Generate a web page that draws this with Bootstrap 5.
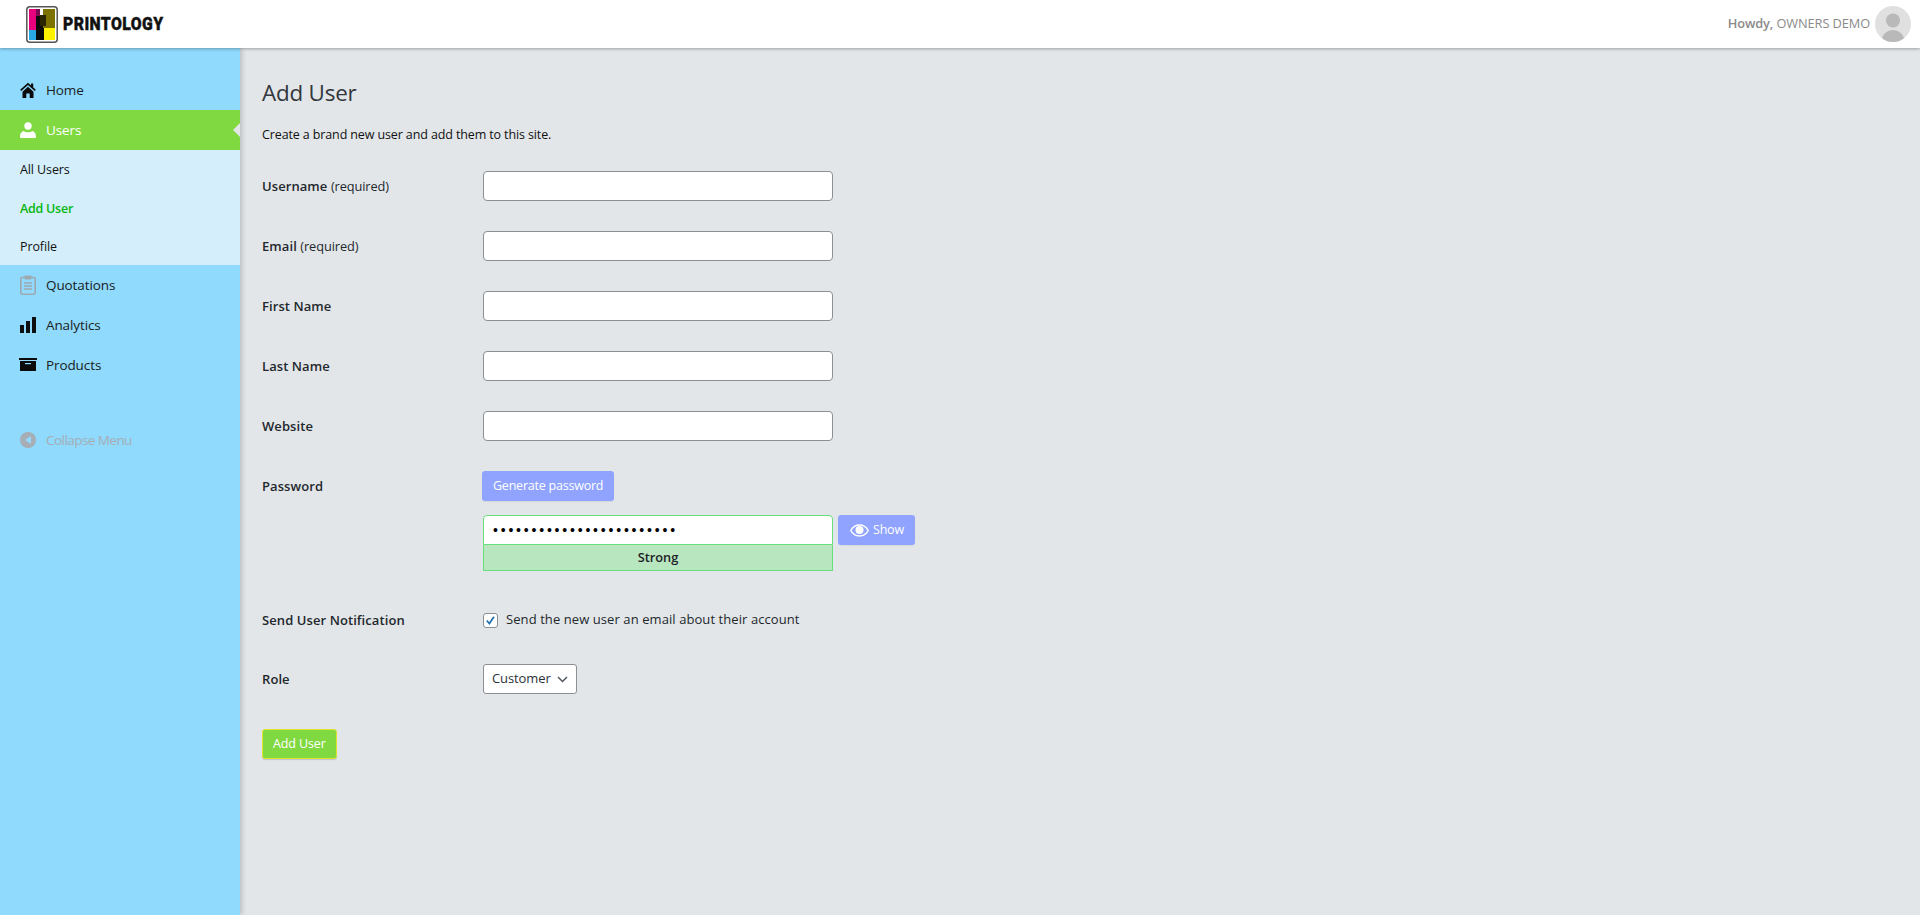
<!DOCTYPE html>
<html lang="en">
<head>
<meta charset="utf-8">
<title>Add User</title>
<link href="https://cdn.jsdelivr.net/npm/bootstrap@5.3.0/dist/css/bootstrap.min.css" rel="stylesheet">
<style>
html,body{height:100%}
body{font-family:"Open Sans","Noto Sans",sans-serif;font-size:13px;background:#e2e6e9;color:#212529;overflow:hidden}
.topbar{height:48px;background:#fff;box-shadow:0 1px 3px rgba(0,0,0,.3);position:relative;z-index:3;padding:0 0 0 26px}
.brand-word{font-family:"Roboto",sans-serif;font-weight:900;font-size:19px;color:#111;letter-spacing:.5px;transform:scaleX(.83);transform-origin:left center;margin-left:5px;width:100px;white-space:nowrap;-webkit-text-stroke:.4px #111}
.howdy{color:#8a8a8a;font-size:12.8px;margin-right:5px;letter-spacing:-.1px}
.howdy b{font-weight:600}
.avatar{width:36px;height:36px;border-radius:50%;background:#e0e0e0;overflow:hidden;margin-right:9px}
.shell{height:calc(100vh - 48px)}
.sidebar{width:240px;flex:none;background:#8fdafd;padding-top:22px;box-shadow:2px 0 5px rgba(0,0,0,.18);position:relative;z-index:2}
.side-link{height:40px;padding-left:20px;color:#1a1d21;text-decoration:none;font-size:13.5px;position:relative;letter-spacing:-.1px}
.side-link svg{width:16px;height:16px;margin-right:10px;flex:none}
.side-link svg.tall-ico{height:20px}
.side-link:hover{color:#1a1d21}
.side-link.is-on{background:#81d942;color:#fff}
.side-link.is-on::after{content:"";position:absolute;right:0;top:13px;border:7px solid transparent;border-right-color:#e2e6e9;border-left-width:0}
.subnav{background:#d4eefc;padding:1px 0 0 20px;height:115px}
.subnav a{display:block;height:38.5px;line-height:38.5px;color:#111;text-decoration:none;font-size:12.5px;letter-spacing:-.1px}
.subnav a.is-here{color:#07b70f;font-weight:600;letter-spacing:-.25px}
.collapse-link{color:#a6adb4;margin-top:35px;letter-spacing:-.55px}
.collapse-link:hover{color:#a6adb4}
.workarea{padding:31px 22px 0;flex:1 1 auto;min-width:0}
.page-title{font-size:22.4px;font-weight:400;line-height:27px;margin:0 0 19px;color:#32373c;letter-spacing:-.2px}
.page-note{font-size:12.5px;line-height:20px;margin:0 0 26px;letter-spacing:-.12px;color:#111}
.fld-row{display:flex;align-items:center;min-height:30px;margin-bottom:30px}
.fld-label{width:221px;flex:none;font-weight:600;font-size:13px;color:#23282d;letter-spacing:.08px;padding-top:1px}
.fld-label span{font-weight:400;font-size:12.8px;letter-spacing:-.1px}
.fld-input{width:350px;height:30px;border:1px solid #8c8f94;border-radius:4px;background:#fff;padding:0 8px;font-size:14px}
.top-row{align-items:flex-start;margin-bottom:34px}
.top-row .fld-label{line-height:30px;padding-top:0}
.btn-pale{background:#8fa3ff;border:0;color:#fff;font-size:12.5px;height:30px;padding:0 11px;border-radius:3px;letter-spacing:-.22px;box-shadow:0 1px 1px rgba(0,0,0,.06)}
.btn-pale:hover{background:#8fa3ff;color:#fff}
.pw-input{width:350px;height:30px;border:1px solid #68de7c;border-radius:4px 4px 0 0;background:#fff;padding:0 9px;font-family:"Liberation Sans",sans-serif;font-size:14px;letter-spacing:2.8px;display:block}
.strength{width:350px;height:26px;line-height:24px;text-align:center;background:#b8e6bf;border:1px solid #68de7c;border-top:0;font-size:12.8px;font-weight:600;color:#1d2327}
.pw-stack{padding-top:6px;gap:5px}
.show-btn{padding:0 9px 0 12px;width:77px}
.tick{width:15px;height:15px;border:1px solid #8c8f94;border-radius:3px;background:#fff;margin:0 8px 0 0;flex:none}
.tick-text{font-size:13px;letter-spacing:.08px;color:#23282d}
.notify-row{margin-bottom:29px}
.role-box{height:30px;width:94px;border:1px solid #8c8f94;border-radius:3px;background:#fff;font-size:13px;padding:0 8px;letter-spacing:-.1px;color:#2c3338}
.btn-go{background:#81d942;border:1px solid #dfe52f;color:#fff;font-size:12.5px;height:30px;padding:0 10px;border-radius:3px;letter-spacing:-.12px;box-shadow:0 1px 1px rgba(0,0,0,.15);margin-top:5px}
.btn-go:hover{background:#81d942;color:#fff;border-color:#dfe52f}
</style>
</head>
<body>
<header class="topbar d-flex align-items-center justify-content-between">
  <div class="d-flex align-items-center">
    <svg width="32" height="37" viewBox="0 0 32 37" aria-label="logo">
      <rect x=".8" y=".8" width="30.400" height="35.400" rx="3" fill="#fff" stroke="#555" stroke-width="1.500"/>
      <rect x="3" y="3" width="9" height="21" fill="#e6007e"/>
      <rect x="3" y="24" width="7" height="10" fill="#29a9e1"/>
      <rect x="17" y="3" width="12" height="31" fill="#fff200"/>
      <rect x="10" y="10" width="8" height="24" fill="#0b0b0b"/>
      <rect x="10" y="3" width="4" height="7" fill="#7a0a50"/>
      <path d="M17 3h12v19H17z" fill="#7d7200"/>
      <rect x="14" y="9" width="6" height="11" fill="#2a2600"/>
    </svg>
    <span class="brand-word">PRINTOLOGY</span>
  </div>
  <div class="d-flex align-items-center">
    <span class="howdy"><b>Howdy,</b> OWNERS DEMO</span>
    <span class="avatar d-block">
      <svg width="36" height="36" viewBox="0 0 36 36"><circle cx="18" cy="14.500" r="7" fill="#b9b9b9"/><ellipse cx="18" cy="34" rx="11" ry="10" fill="#b9b9b9"/></svg>
    </span>
  </div>
</header>
<div class="shell d-flex">
  <nav class="sidebar">
    <a href="#" class="side-link d-flex align-items-center">
      <svg viewBox="0 0 16 16"><path d="M.7 8.300 8 1.800l7.300 6.500" fill="none" stroke="#0b0b0b" stroke-width="1.700"/><rect x="11" y="1.500" width="2.200" height="4" fill="#0b0b0b"/><path d="M2.500 9.700 8 4.800l5.500 4.900V16H9.700v-4.500H6.300V16H2.500z" fill="#0b0b0b"/></svg>
      Home
    </a>
    <a href="#" class="side-link is-on d-flex align-items-center">
      <svg viewBox="0 0 16 16"><circle cx="8" cy="4" r="3.700" fill="#fff"/><path d="M0 15c0-3 .8-5 3.500-6 1 1 2.900 1.300 4.500 1.300S11.500 10 12.500 9c2.700 1 3.500 3 3.500 6 0 .6-.4 1-1 1H1c-.6 0-1-.4-1-1z" fill="#fff"/></svg>
      Users
    </a>
    <div class="subnav">
      <a href="#">All Users</a>
      <a href="#" class="is-here">Add User</a>
      <a href="#">Profile</a>
    </div>
    <a href="#" class="side-link d-flex align-items-center">
      <svg class="tall-ico" viewBox="0 0 16 20"><rect x=".8" y="2.500" width="14.400" height="16.700" rx="1.500" fill="none" stroke="#9ea8b0" stroke-width="1.600"/><rect x="4.500" y=".5" width="7" height="4" rx="1" fill="#9ea8b0"/><path d="M4 8h8M4 11h8M4 14h8" stroke="#9ea8b0" stroke-width="1.300"/></svg>
      Quotations
    </a>
    <a href="#" class="side-link d-flex align-items-center">
      <svg viewBox="0 0 16 16"><rect y="8" width="4" height="8" fill="#0e0e12"/><rect x="6" y="4" width="4" height="12" fill="#0e0e12"/><rect x="12" width="4" height="16" fill="#0e0e12"/></svg>
      Analytics
    </a>
    <a href="#" class="side-link d-flex align-items-center">
      <svg viewBox="0 0 16 16" style="overflow:visible"><rect x="-1" y="1" width="18" height="2" fill="#0b0b0b"/><path d="M0 4h16v10H0z" fill="#0b0b0b"/><rect x="5" y="6" width="6" height="1.200" fill="#8fdafd"/></svg>
      Products
    </a>
    <a href="#" class="side-link collapse-link d-flex align-items-center">
      <svg viewBox="0 0 16 16"><circle cx="8" cy="8" r="8" fill="#a6adb4"/><path d="M11 4v8L5 8z" fill="#8fdafd"/></svg>
      Collapse Menu
    </a>
  </nav>
  <main class="workarea">
    <h1 class="page-title">Add User</h1>
    <p class="page-note">Create a brand new user and add them to this site.</p>
    <form onsubmit="return false">
      <div class="fld-row"><label class="fld-label">Username <span>(required)</span></label><input class="fld-input" type="text"></div>
      <div class="fld-row"><label class="fld-label">Email <span>(required)</span></label><input class="fld-input" type="text"></div>
      <div class="fld-row"><label class="fld-label">First Name</label><input class="fld-input" type="text"></div>
      <div class="fld-row"><label class="fld-label">Last Name</label><input class="fld-input" type="text"></div>
      <div class="fld-row"><label class="fld-label">Website</label><input class="fld-input" type="text"></div>
      <div class="fld-row top-row">
        <label class="fld-label">Password</label>
        <div>
          <button type="button" class="btn btn-pale mb-2 d-block" style="margin-left:-1px">Generate password</button>
          <div class="d-flex align-items-start pw-stack">
            <div>
              <input class="pw-input" type="password" value="abcdefghijklmnopqrstuvwx">
              <div class="strength">Strong</div>
            </div>
            <button type="button" class="btn btn-pale show-btn d-flex align-items-center gap-1">
              <svg width="19" height="13" viewBox="0 0 19 13"><path d="M9.500 1C5.300 1 2.300 3.700.8 6.500 2.300 9.300 5.300 12 9.500 12s7.200-2.700 8.700-5.500C16.700 3.700 13.700 1 9.500 1z" fill="none" stroke="#fff" stroke-width="1.500"/><circle cx="9.500" cy="6" r="4" fill="#fff"/></svg>
              Show
            </button>
          </div>
        </div>
      </div>
      <div class="fld-row notify-row">
        <label class="fld-label">Send User Notification</label>
        <svg class="tick" viewBox="0 0 15 15"><path d="M3.200 7.500 6.200 11 11.500 3.200" fill="none" stroke="#2271b1" stroke-width="2"/></svg>
        <span class="tick-text">Send the new user an email about their account</span>
      </div>
      <div class="fld-row">
        <label class="fld-label">Role</label>
        <div class="role-box d-flex align-items-center justify-content-between">
          Customer
          <svg width="11" height="7" viewBox="0 0 11 7"><path d="M1 1l4.500 4.500L10 1" fill="none" stroke="#50575e" stroke-width="1.500"/></svg>
        </div>
      </div>
      <button type="button" class="btn btn-go">Add User</button>
    </form>
  </main>
</div>
<script src="https://cdn.jsdelivr.net/npm/bootstrap@5.3.0/dist/js/bootstrap.bundle.min.js"></script>
</body>
</html>
